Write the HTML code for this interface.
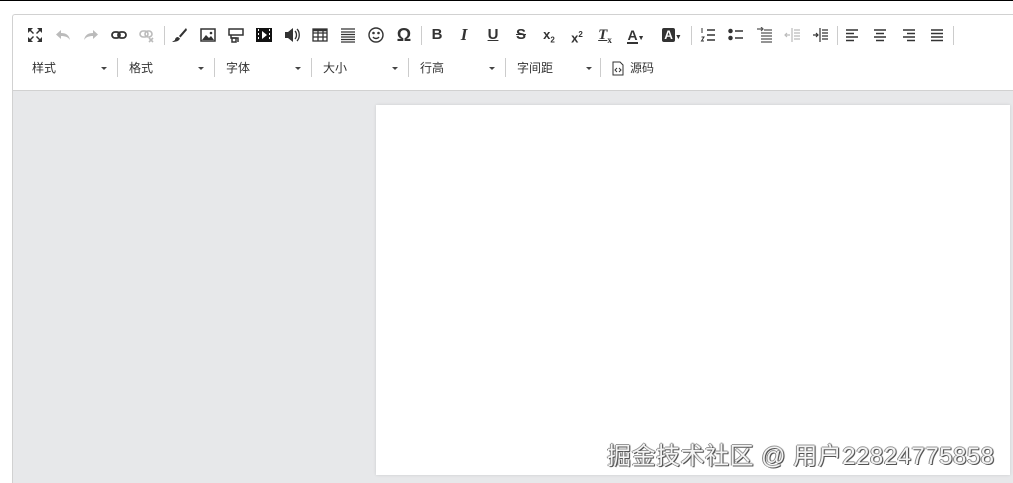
<!DOCTYPE html>
<html><head><meta charset="utf-8"><style>
html,body{margin:0;padding:0;width:1013px;height:483px;overflow:hidden;background:#fff;font-family:"Liberation Sans","Noto Sans CJK SC",sans-serif;position:relative}
.top{position:absolute;left:0;top:0;width:1013px;height:1px;background:#000}
.box{position:absolute;left:12px;top:14px;width:1000px;height:469px;border-left:1px solid #d1d1d1;border-top:1px solid #d1d1d1;border-radius:3px 0 0 0;background:#fff}
.grey{position:absolute;left:13px;top:90px;width:1000px;height:393px;background:#e7e8ea;border-top:1px solid #d1d1d1}
.page{position:absolute;left:376px;top:105px;width:634px;height:370px;background:#fff;box-shadow:0 0 3px rgba(0,0,0,.12)}
.i{position:absolute;top:26px;width:20px;height:18px;font-size:15px;color:#333;text-align:center;line-height:18px;font-weight:bold}
.i svg{width:16px;height:16px;margin-top:1px}
.sep{position:absolute;width:1px;height:19px;background:#ccc}
.dd{position:absolute;top:60px;font-size:12px;color:#333;line-height:16px}
.ar{position:absolute;top:67px;width:0;height:0;border-left:3px solid transparent;border-right:3px solid transparent;border-top:3px solid #444}
.wm{position:absolute;left:607px;top:436px;font-size:24px;color:#f4f4f4;text-shadow:1px 1px 0 #555,-1px 0 0 #888,0 -1px 0 #999,1px 0 1px #444;letter-spacing:0.5px;white-space:nowrap}
</style></head><body>
<div class="top"></div>
<div class="box"></div>
<div class="i" style="left:25px"><svg viewBox="0 0 16 16" fill="#333"><path d="M1 1h5l-2 2 3 3-1 1-3-3-2 2zM15 1v5l-2-2-3 3-1-1 3-3-2-2zM1 15v-5l2 2 3-3 1 1-3 3 2 2zM15 15h-5l2-2-3-3 1-1 3 3 2-2z"/></svg></div>
<div class="i" style="left:53px;color:#bbb"><svg viewBox="0 0 16 16" fill="#bbb"><path d="M6 3v3c5 0 8 2 9 7-2-3-5-4-9-4v3L1 7.5z"/></svg></div>
<div class="i" style="left:81px"><svg viewBox="0 0 16 16" fill="#bbb"><path d="M10 3v3C5 6 2 8 1 13c2-3 5-4 9-4v3l5-4.5z"/></svg></div>
<div class="i" style="left:109px"><svg viewBox="0 0 16 16" fill="none" stroke="#333" stroke-width="1.8"><rect x="1" y="5" width="8" height="6" rx="3"/><rect x="7" y="5" width="8" height="6" rx="3"/></svg></div>
<div class="i" style="left:137px"><svg viewBox="0 0 16 16" fill="none" stroke="#bbb" stroke-width="1.6"><rect x="1" y="4" width="8" height="6" rx="3"/><rect x="6" y="4" width="7" height="6" rx="3"/><path d="M10 11l4 4M14 11l-4 4"/></svg></div>
<div class="sep" style="left:164px;top:26px"></div>
<div class="i" style="left:169px"><svg viewBox="0 0 16 16" fill="#333"><path d="M15 1l-7 8 1.5 1.5L16 3zM7 10c-3 0-3 3-3 3l-3 2c4 0 7-1 8-3.5z"/></svg></div>
<div class="i" style="left:198px"><svg viewBox="0 0 16 16"><rect x="1" y="2" width="14" height="12" fill="none" stroke="#333" stroke-width="1.5"/><path d="M2 13l4-5 3 3 2-2 3 4z" fill="#333"/><circle cx="11" cy="6" r="1.3" fill="#333"/></svg></div>
<div class="i" style="left:226px"><svg viewBox="0 0 16 16" fill="none" stroke="#333" stroke-width="1.5"><rect x="1" y="2" width="14" height="6"/><path d="M3 8v3h7v4"/><rect x="4" y="11" width="4" height="4"/></svg></div>
<div class="i" style="left:254px"><svg viewBox="0 0 16 16"><rect x="0" y="1" width="16" height="14" fill="#111"/><path d="M2 2h1v2H2zM2 6h1v2H2zM2 10h1v2H2zM13 2h1v2h-1zM13 6h1v2h-1zM13 10h1v2h-1z" fill="#fff"/><path d="M6 4l5 4-5 4z" fill="#fff"/></svg></div>
<div class="i" style="left:282px"><svg viewBox="0 0 16 16" fill="#333"><path d="M1 5h3l5-4v14l-5-4H1z"/><path d="M11 4c2 2 2 6 0 8M13 2c3 3 3 9 0 12" stroke="#333" fill="none" stroke-width="1.3"/></svg></div>
<div class="i" style="left:310px"><svg viewBox="0 0 16 16" fill="none" stroke="#333" stroke-width="1.3"><rect x="1" y="2" width="14" height="12"/><path d="M1 6h14M1 10h14M6 2v12M11 2v12"/><path d="M1 3h14" stroke-width="2.5"/></svg></div>
<div class="i" style="left:338px"><svg viewBox="0 0 16 16" stroke="#333" stroke-width="1.2"><path d="M1 2h14M1 5h14M1 7.5h14M1 10h14M1 12.5h14M1 15h14"/></svg></div>
<div class="i" style="left:366px"><svg viewBox="0 0 16 16" fill="none" stroke="#333" stroke-width="1.4"><circle cx="8" cy="8" r="7"/><path d="M5 10c1.5 2 4.5 2 6 0"/><circle cx="5.5" cy="6" r=".6"/><circle cx="10.5" cy="6" r=".6"/></svg></div>
<div class="i" style="left:394px;font-size:18px">Ω</div>
<div class="sep" style="left:421px;top:26px"></div>
<div class="i" style="left:427px">B</div>
<div class="i" style="left:454px;font-style:italic;font-family:'Liberation Serif',serif;font-size:17px">I</div>
<div class="i" style="left:483px;text-decoration:underline">U</div>
<div class="i" style="left:511px;text-decoration:line-through">S</div>
<div class="i" style="left:539px;font-size:13px">x<sub style="font-size:8px">2</sub></div>
<div class="i" style="left:567px;font-size:13px">x<sup style="font-size:8px">2</sup></div>
<div class="i" style="left:595px;font-style:italic;font-family:'Liberation Serif',serif;text-decoration:underline">T<sub style="font-size:9px;font-style:normal;text-decoration:none">x</sub></div>
<div class="i" style="left:624px;width:24px;font-size:14px"><span style="border-bottom:2px solid #333;line-height:14px;display:inline-block">A</span><span style="font-size:7px">▼</span></div>
<div class="i" style="left:659px;width:26px;font-size:12px"><span style="background:#333;color:#fff;padding:0 2px;border-radius:2px">A</span><span style="font-size:7px">▼</span></div>
<div class="sep" style="left:691px;top:26px"></div>
<div class="i" style="left:698px"><svg viewBox="0 0 16 16" stroke="#333" stroke-width="1.5" fill="none"><path d="M7 3h8M7 8h8M7 13h8"/><path d="M2 1v5M1.5 10h2.5l-2.5 4h2.5" stroke-width="1"/></svg></div>
<div class="i" style="left:726px"><svg viewBox="0 0 16 16" stroke="#333" stroke-width="1.5" fill="#333"><circle cx="2.5" cy="4" r="1.5"/><circle cx="2.5" cy="11" r="1.5"/><path d="M7 4h8M7 11h8" fill="none"/></svg></div>
<div class="i" style="left:754px"><svg viewBox="0 0 16 16" stroke="#555" stroke-width="1.2" fill="none"><path d="M1 2h6M5 0l2 2-2 2M8 3h8M5 6h11M5 9h11M5 12h11M5 15h11"/></svg></div>
<div class="i" style="left:782px"><svg viewBox="0 0 16 16" stroke="#bbb" stroke-width="1.2" fill="none"><path d="M8 1v14M10 3h6M10 6h6M10 9h6M10 12h6M1 8h5M3 6l-2 2 2 2"/></svg></div>
<div class="i" style="left:810px"><svg viewBox="0 0 16 16" stroke="#333" stroke-width="1.2" fill="none"><path d="M8 1v14M10 3h6M10 6h6M10 9h6M10 12h6M1 8h5M4 6l2 2-2 2"/></svg></div>
<div class="sep" style="left:837px;top:26px"></div>
<div class="i" style="left:842px"><svg viewBox="0 0 16 16" stroke="#333" stroke-width="1.5"><path d="M2 3h12M2 6.5h8M2 10h12M2 13.5h8"/></svg></div>
<div class="i" style="left:870px"><svg viewBox="0 0 16 16" stroke="#333" stroke-width="1.5"><path d="M2 3h12M4 6.5h8M2 10h12M4 13.5h8"/></svg></div>
<div class="i" style="left:899px"><svg viewBox="0 0 16 16" stroke="#333" stroke-width="1.5"><path d="M2 3h12M6 6.5h8M2 10h12M6 13.5h8"/></svg></div>
<div class="i" style="left:927px"><svg viewBox="0 0 16 16" stroke="#333" stroke-width="1.5"><path d="M2 3h12M2 6.5h12M2 10h12M2 13.5h12"/></svg></div>
<div class="sep" style="left:953px;top:26px"></div>
<div class="dd" style="left:32px">样式</div><div class="ar" style="left:101px"></div><div class="sep" style="left:117px;top:58px"></div>
<div class="dd" style="left:129px">格式</div><div class="ar" style="left:198px"></div><div class="sep" style="left:214px;top:58px"></div>
<div class="dd" style="left:226px">字体</div><div class="ar" style="left:295px"></div><div class="sep" style="left:311px;top:58px"></div>
<div class="dd" style="left:323px">大小</div><div class="ar" style="left:392px"></div><div class="sep" style="left:408px;top:58px"></div>
<div class="dd" style="left:420px">行高</div><div class="ar" style="left:489px"></div><div class="sep" style="left:505px;top:58px"></div>
<div class="dd" style="left:517px">字间距</div><div class="ar" style="left:586px"></div><div class="sep" style="left:600px;top:58px"></div>
<svg style="position:absolute;left:612px;top:61px" width="12" height="15" viewBox="0 0 12 15" fill="none" stroke="#333" stroke-width="1"><path d="M1 1h7l3 3v10H1z"/><path d="M5 7l-2 2 2 2M7 7l2 2-2 2"/></svg>
<div class="dd" style="left:630px">源码</div>
<div class="grey"></div>
<div class="page"></div>
<div class="wm">掘金技术社区 @ 用户22824775858</div>
</body></html>
